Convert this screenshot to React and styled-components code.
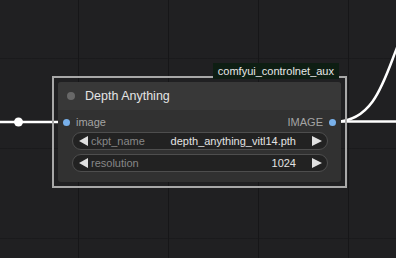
import React from "react";
import styled, { createGlobalStyle } from "styled-components";

const GlobalStyle = createGlobalStyle`
  html, body {
    margin: 0;
    padding: 0;
    background: #1f1f21;
    overflow: hidden;
  }
  * { box-sizing: border-box; }
`;

const Canvas = styled.div`
  position: relative;
  width: 396px;
  height: 258px;
  overflow: hidden;
  font-family: "Liberation Sans", Arial, sans-serif;
  background-color: #202022;
  background-image:
    linear-gradient(to right, #161618 1px, transparent 1px),
    linear-gradient(to bottom, rgba(20, 20, 22, 0.5) 1px, transparent 1px);
  background-size: 90px 100%, 100% 90px;
  background-position: 78px 0, 0 58px;
`;

const Wires = styled.svg`
  position: absolute;
  left: 0;
  top: 0;
  width: 396px;
  height: 258px;
`;

const Selection = styled.div`
  position: absolute;
  left: 52px;
  top: 76px;
  width: 295px;
  height: 112px;
  border: 2px solid #a8a8a8;
  padding: 4px;
`;

const GroupLabel = styled.div`
  position: absolute;
  top: -15px;
  right: 6px;
  height: 16px;
  padding: 0 5px;
  display: flex;
  align-items: center;
  background: #0e1e13;
  color: #e8e8e8;
  font-size: 11px;
  white-space: nowrap;
`;

const Node = styled.div`
  display: flex;
  flex-direction: column;
  height: 100%;
  border-radius: 3px;
  overflow: hidden;
  background: #313131;
`;

const TitleBar = styled.div`
  display: flex;
  align-items: center;
  gap: 10px;
  height: 28px;
  padding-left: 9px;
  background: #383838;
  color: #e4e4e4;
  font-size: 12.5px;
`;

const Dot = styled.span`
  width: ${(p) => p.size}px;
  height: ${(p) => p.size}px;
  border-radius: 50%;
  background: ${(p) => p.color};
  flex: none;
`;

const Body = styled.div`
  display: flex;
  flex-direction: column;
  padding: 4px 0 10px;
`;

const SlotRow = styled.div`
  display: flex;
  align-items: center;
  justify-content: space-between;
  height: 16px;
  padding: 0 5px;
  margin-bottom: 2px;
  color: #a4a4a4;
  font-size: 11px;
`;

const Slot = styled.div`
  display: flex;
  align-items: center;
  gap: ${(p) => p.gap}px;
`;

const Widgets = styled.div`
  display: flex;
  flex-direction: column;
  gap: 4px;
  padding: 0 13px 0 14px;
`;

const Widget = styled.div`
  display: flex;
  align-items: center;
  height: 18px;
  padding: 0 5px 0 6px;
  border: 1px solid #4e4e4e;
  border-radius: 9px;
  background: #222222;
  font-size: 11px;
`;

const Arrow = styled.span`
  width: 0;
  height: 0;
  flex: none;
  border-top: 5px solid transparent;
  border-bottom: 5px solid transparent;
  ${(p) =>
    p.dir === "left"
      ? "border-right: 9px solid #e0e0e0;"
      : "border-left: 10px solid #e0e0e0;"}
`;

const WidgetLabel = styled.span`
  margin-left: 3px;
  color: #878787;
`;

const WidgetValue = styled.span`
  margin-left: auto;
  margin-right: 16px;
  color: #e2e2e2;
`;

const widgets = [
  { name: "ckpt_name", value: "depth_anything_vitl14.pth" },
  { name: "resolution", value: "1024" },
];

export default function App() {
  return (
    <>
      <GlobalStyle />
      <Canvas>
        <Wires viewBox="0 0 396 258">
          <line x1="0" y1="122" x2="60" y2="122" stroke="#fff" strokeWidth="2.5" />
          <circle cx="18.5" cy="122" r="4.5" fill="#fff" />
          <line x1="336" y1="121.5" x2="396" y2="121.5" stroke="#fff" strokeWidth="2.5" />
          <path
            d="M 336 121.5 C 376 121 385 76 400 40"
            fill="none"
            stroke="#fff"
            strokeWidth="2.5"
          />
        </Wires>
        <Selection>
          <GroupLabel>comfyui_controlnet_aux</GroupLabel>
          <Node>
            <TitleBar>
              <Dot size={8} color="#686868" />
              Depth Anything
            </TitleBar>
            <Body>
              <SlotRow>
                <Slot gap={6}>
                  <Dot size={7} color="#78b0ea" />
                  image
                </Slot>
                <Slot gap={6}>
                  IMAGE
                  <Dot size={7} color="#78b0ea" />
                </Slot>
              </SlotRow>
              <Widgets>
                {widgets.map((w) => (
                  <Widget key={w.name}>
                    <Arrow dir="left" />
                    <WidgetLabel>{w.name}</WidgetLabel>
                    <WidgetValue>{w.value}</WidgetValue>
                    <Arrow dir="right" />
                  </Widget>
                ))}
              </Widgets>
            </Body>
          </Node>
        </Selection>
      </Canvas>
    </>
  );
}
